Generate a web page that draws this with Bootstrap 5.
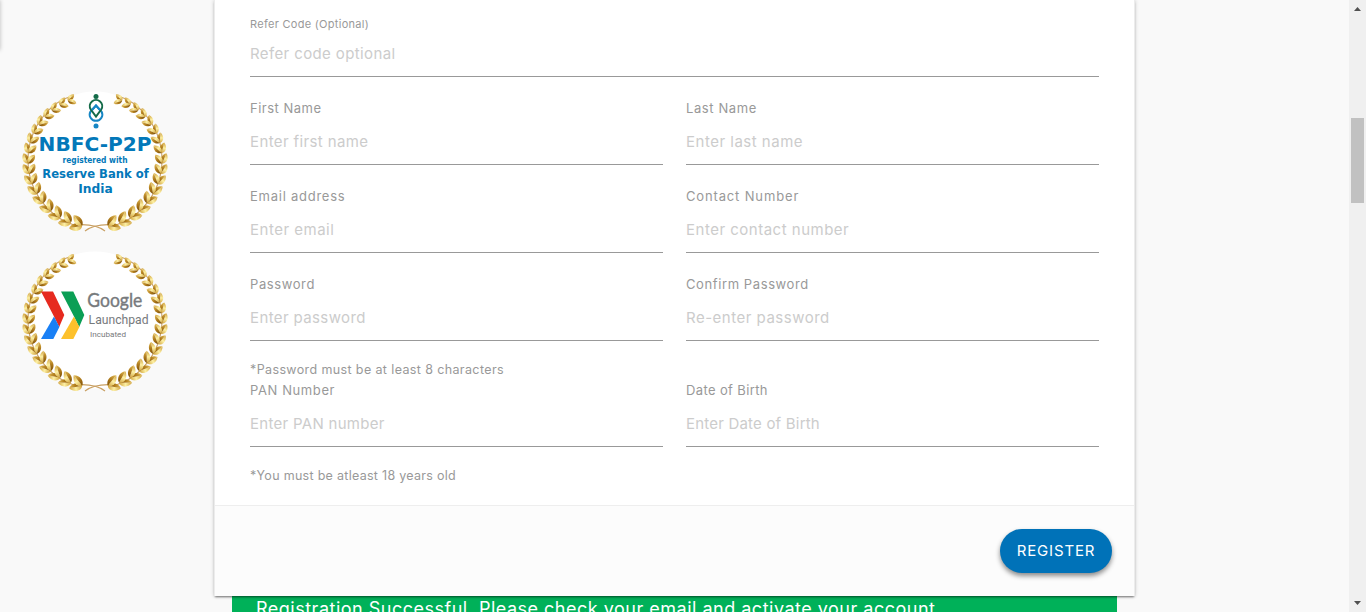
<!DOCTYPE html>
<html lang="en">
<head>
<meta charset="utf-8">
<meta name="viewport" content="width=device-width, initial-scale=1">
<title>Register</title>
<link href="https://cdn.jsdelivr.net/npm/bootstrap@5.3.0/dist/css/bootstrap.min.css" rel="stylesheet">
<style>
body { background: #f9f9f9; font-family: Inter, "Open Sans", sans-serif; overflow: hidden; }
.page-wrap { height: 612px; overflow: hidden; }
.side-nav { top: 0; left: -10px; width: 10px; height: 50px; box-shadow: 0 0 4px rgba(0,0,0,.25); }
.badges { width: 214px; padding: 90px 0 0 20px; }
.badges svg { display: block; margin-bottom: 10px; }
.seal-blue { font-family: "DejaVu Sans", sans-serif; font-weight: 700; fill: #0378b9; }
.form-col { width: 921px; }
.reg-card { height: 596px; background: #fff; border: 1px solid #ececec; border-width: 0 1px; border-radius: 0; box-shadow: 0 2px 2px -1px rgba(0,0,0,.5), 0 0 4px rgba(0,0,0,.2); z-index: 1; }
.reg-body { height: 505px; padding: 0 35px; }
.grp { height: 66px; margin-bottom: 22px; }
.grp.has-hint { margin-bottom: 19px; }
.refer { height: 77px; padding-top: 15px; margin-bottom: 22px; }
.grp label, .refer label { display: block; font-size: 13px; line-height: 18px; height: 20px; color: #999; white-space: nowrap; }
.refer label { font-size: 11px; line-height: 18px; height: 18px; }
.reg-body .form-control { border: 0; border-bottom: 1px solid #999; border-radius: 0; background: none; padding: 0; height: 46px; font-size: 15px; }
.refer .form-control { height: 44px; padding-bottom: 3px; }
.reg-body .form-control::placeholder { color: #ccc; opacity: 1; }
.fields { --bs-gutter-x: 23px; }
.hint { font-size: 12.5px; line-height: 20px; height: 21px; color: #999; white-space: nowrap; }
.reg-foot { height: 91px; background: #fcfcfc; border-top: 1px solid #eee; padding: 23px 22px 0; }
.btn-reg, .btn-reg:hover { width: 112px; height: 44px; border: 0; border-radius: 22px; background: #0072b8; color: #fff; font-size: 15px; padding: 1px 0 0; box-shadow: 0 3px 5px rgba(0,0,0,.45); }
.ok-bar { margin: 0 18px; height: 30px; background: #00b159; color: #fff; font-size: 18px; line-height: 26px; padding-left: 24px; white-space: nowrap; }
.track { width: 17px; height: 612px; background: #f0f0f0; padding: 7px 2px; }
.thumb { width: 13px; height: 85px; background: #c1c1c1; margin-top: 107px; }
.ls-2 { letter-spacing: .2px; } .ls-3 { letter-spacing: .29px; } .ls-4 { letter-spacing: .38px; }
.ls-5 { letter-spacing: .5px; } .ls-6 { letter-spacing: .6px; } .ls-7 { letter-spacing: .75px; } .ls-9 { letter-spacing: .85px; }
</style>
</head>
<body>
<svg width="0" height="0" class="position-absolute">
  <defs>
    <linearGradient id="gold" x1="0" y1="0" x2="1" y2="0">
      <stop offset="0" stop-color="#7d4f06"/><stop offset=".5" stop-color="#b07c1c"/><stop offset="1" stop-color="#e3bd58"/>
    </linearGradient>
    <linearGradient id="pale" x1="0" y1="0" x2="1" y2="0">
      <stop offset="0" stop-color="#d0a23c"/><stop offset=".5" stop-color="#fdf0a4"/><stop offset="1" stop-color="#d0a23c"/>
    </linearGradient>
    <g id="leaf">
      <path d="M0 0C1-3.8 7-5 11 0Z" fill="url(#pale)"/>
      <path d="M0 0C2 3.8 8 4 11 0Z" fill="url(#gold)"/>
    </g>
    <g id="branch"></g>
    <g id="wreath">
      <ellipse cx="75" cy="70" rx="66" ry="68.5" fill="#fff"/>
      <use href="#branch"/>
      <use href="#branch" transform="translate(150 0) scale(-1 1)"/>
    </g>
  </defs>
</svg>

<div class="page-wrap d-flex position-relative">
  <div class="side-nav position-absolute"></div>

  <aside class="badges flex-shrink-0">
    <svg width="150" height="150" viewBox="0 0 150 150">
      <use href="#wreath"/>
      <g fill="none" stroke-width="2">
        <path d="M70.5 21.5a6.3 6.3 0 1 0 11 0L76 15.5Z" stroke="#1686c4"/>
        <path d="M70.8 19.5a6.2 6.2 0 1 1 10.4 0L76 26.5Z" stroke="#146b49"/>
        <path d="M72 20l4-4.5 4 4.5" stroke="#1686c4"/>
      </g>
      <circle cx="76" cy="6.6" r="2.5" fill="#146b49"/>
      <circle cx="76" cy="36" r="2.5" fill="#1686c4"/>
      <g class="seal-blue">
        <text x="18.6" y="60.5" font-size="20" textLength="113" lengthAdjust="spacingAndGlyphs">NBFC-P2P</text>
        <text x="42.5" y="73.3" font-size="8.6" textLength="65" lengthAdjust="spacingAndGlyphs">registered with</text>
        <text x="22.3" y="88.3" font-size="12" textLength="106.5" lengthAdjust="spacingAndGlyphs">Reserve Bank of</text>
        <text x="58.3" y="102.8" font-size="12" textLength="34.5" lengthAdjust="spacingAndGlyphs">India</text>
      </g>
    </svg>
    <svg width="150" height="150" viewBox="0 0 150 150">
      <use href="#wreath"/>
      <path d="M21 41.5H33L44.3 65l-5.1 12L34 66.5Z" fill="#e62a1f"/>
      <path d="M34 66.5L39.4 77 33.3 89H21Z" fill="#1a80f5"/>
      <path d="M41 41.5H53.3L64.3 65l-5.1 12L54 66.5Z" fill="#0b9f55"/>
      <path d="M54 66.5L59.4 77 53.3 89H41Z" fill="#fdc12c"/>
      <g fill="#777a7d">
        <text x="67.3" y="56.5" font-size="19" font-family="Lato, sans-serif" textLength="55" stroke="#777a7d" stroke-width=".4" lengthAdjust="spacingAndGlyphs">Google</text>
        <text x="68.6" y="74" font-size="13.5" font-family="Roboto, sans-serif" textLength="60" lengthAdjust="spacingAndGlyphs">Launchpad</text>
        <text x="70" y="86.5" font-size="7.5" font-family="Roboto, sans-serif" textLength="36" lengthAdjust="spacingAndGlyphs">Incubated</text>
      </g>
    </svg>
  </aside>

  <main class="form-col flex-shrink-0">
    <form class="reg-card card">
      <div class="reg-body">
        <div class="refer">
          <label class="ls-3" for="refer">Refer Code (Optional)</label>
          <input id="refer" class="form-control ls-4" placeholder="Refer code optional">
        </div>
        <div class="row fields">
          <div class="col-6"><div class="grp"><label class="ls-5">First Name</label><input class="form-control ls-4" placeholder="Enter first name"></div></div>
          <div class="col-6"><div class="grp"><label class="ls-6">Last Name</label><input class="form-control ls-5" placeholder="Enter last name"></div></div>
          <div class="col-6"><div class="grp"><label class="ls-7">Email address</label><input class="form-control ls-5" placeholder="Enter email"></div></div>
          <div class="col-6"><div class="grp"><label class="ls-9">Contact Number</label><input class="form-control ls-5" placeholder="Enter contact number"></div></div>
          <div class="col-6">
            <div class="grp has-hint"><label class="ls-6">Password</label><input class="form-control ls-4" placeholder="Enter password"></div>
            <div class="hint ls-4">*Password must be at least 8 characters</div>
          </div>
          <div class="col-6"><div class="grp"><label class="ls-6">Confirm Password</label><input class="form-control ls-5" placeholder="Re-enter password"></div></div>
          <div class="col-6">
            <div class="grp has-hint"><label class="ls-6">PAN Number</label><input class="form-control ls-3" placeholder="Enter PAN number"></div>
            <div class="hint ls-3">*You must be atleast 18 years old</div>
          </div>
          <div class="col-6"><div class="grp"><label class="ls-4">Date of Birth</label><input class="form-control ls-2" placeholder="Enter Date of Birth"></div></div>
        </div>
      </div>
      <div class="reg-foot d-flex justify-content-end align-items-start">
        <button type="button" class="btn btn-reg ls-9">REGISTER</button>
      </div>
    </form>
    <div class="ok-bar ls-5">Registration Successful. Please check your email and activate your account.</div>
  </main>

  <div class="track ms-auto d-flex flex-column flex-shrink-0">
    <svg width="13" height="4" viewBox="0 0 13 4"><path d="M3 4L6.5 0 10 4Z" fill="#505050"/></svg>
    <div class="thumb"></div>
    <svg class="mt-auto" width="13" height="4" viewBox="0 0 13 4"><path d="M3 0L6.5 4 10 0Z" fill="#505050"/></svg>
  </div>
</div>

<script src="https://cdn.jsdelivr.net/npm/bootstrap@5.3.0/dist/js/bootstrap.bundle.min.js"></script>
<script>
// Leaf pairs follow the left half of the ring; angle 0 is the bottom of the seal.
const pairs = 17, rx = 67, ry = 66;
let out = '<path d="M85 141C76 134 64 134 54 135C30 128 8 102 8 70C8 38 30 12 52 6" fill="none" stroke="#c9a063" stroke-width="1.1"/>';
let a = 11;
for (let i = 0; i < pairs; i++) {
  const t = a * Math.PI / 180, k = 1.22 - 0.42 * i / (pairs - 1);
  const x = 75 - rx * Math.sin(t), y = 71 + ry * Math.cos(t);
  const dir = 180 + a;
  for (const turn of [-22, 40])
    out += `<use href="#leaf" transform="translate(${x.toFixed(1)} ${y.toFixed(1)}) rotate(${(dir + turn).toFixed(1)}) scale(${k.toFixed(2)})"/>`;
  a += 10.1 - 2.2 * i / (pairs - 1);
}
document.getElementById('branch').innerHTML = out;
</script>
</body>
</html>
